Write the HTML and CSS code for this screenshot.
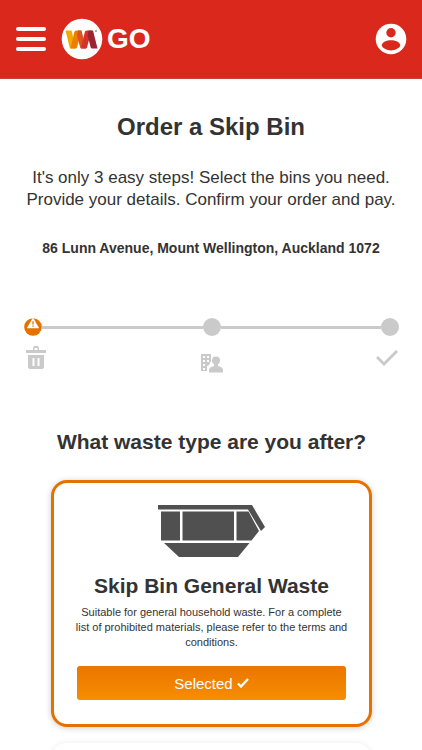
FILE: index.html
```html
<!DOCTYPE html>
<html lang="en">
<head>
<meta charset="utf-8">
<meta name="viewport" content="width=device-width, initial-scale=1">
<title>Order a Skip Bin</title>
<link rel="stylesheet" href="styles.css">
</head>
<body>
<header class="topbar">
  <button class="icon-button" type="button" aria-label="Menu">
    <svg width="32" height="26" viewBox="0 0 32 26" fill="none" stroke="#fff" stroke-width="4" stroke-linecap="round"><path d="M3 3h26M3 13h26M3 23h26"/></svg>
  </button>
  <a class="brand" href="#">
    <svg width="42" height="42" viewBox="0 0 42 42" aria-hidden="true">
      <circle cx="21" cy="21" r="20.300" fill="#fff"/>
      <path fill="#f2a900" d="M4.500 12.500h6l4.500 18H10q-1 0-1.300-1z"/>
      <path fill="#ef7d00" d="M15.500 12.500h5l-4.500 17q-.3 1-1.500 1H9.500l3.700-16q.3-2 2.300-2z"/>
      <path fill="#d9541e" d="M17 12.500h3.500l4.500 18h-4.500q-1 0-1.300-1l-3.200-12z"/>
      <path fill="#d6322b" d="M25.500 12.500h5l-4.500 17q-.3 1-1.500 1h-4.500l3.700-16q.3-2 1.800-2z"/>
      <path fill="#9b2433" d="M27.500 12.500H32l4.500 18h-5.500q-1 0-1.300-1l-3-12z"/>
      <circle cx="35" cy="13" r=".9" fill="#888"/>
    </svg>
    <span>GO</span>
  </a>
  <button class="icon-button account" type="button" aria-label="Account">
    <svg width="32" height="32" viewBox="0 0 32 32"><circle cx="16" cy="16" r="15.300" fill="#fff"/><circle cx="16" cy="9.800" r="4.700" fill="#da291c"/><path d="M6.800 22.300c0-3.200 5-5.100 9.200-5.100s9.200 1.900 9.200 5.100c0 2.800-5 5.100-9.200 5.100s-9.200-2.300-9.200-5.100z" fill="#da291c"/></svg>
  </button>
</header>

<main>
  <section class="intro">
    <h1>Order a Skip Bin</h1>
    <p class="lead">It's only 3 easy steps! Select the bins you need. Provide your details. Confirm your order and pay.</p>
    <p class="address">86 Lunn Avenue, Mount Wellington, Auckland 1072</p>
  </section>

  <div class="progress" aria-label="Order steps">
    <div class="track">
      <svg class="dot" viewBox="0 0 19 19"><circle cx="9.500" cy="9.500" r="9.300" fill="#e57200"/><path d="M9.500 0L15.500 10.500h-12z" fill="#fff" stroke="#fff" stroke-linejoin="round" stroke-width=".6"/><path d="M9.500 3.500v3.300M9.500 7.800v1.400" stroke="#e57200" stroke-width="1.400"/></svg>
      <span class="line"></span>
      <span class="dot idle"></span>
      <span class="line"></span>
      <span class="dot idle"></span>
    </div>
    <div class="step-icons">
      <svg viewBox="0 0 22 28" fill="#cacacb"><path d="M0 4h7V2q0-2 2-2h2q2 0 2 2v2h7v3H0zM8.500 4h3V2h-3z" fill-rule="evenodd"/><path fill-rule="evenodd" d="M2 9h16v12q0 2-2 2H4q-2 0-2-2zM6.500 12v8h2v-8zM11.500 12v8h2v-8z"/></svg>
      <svg viewBox="0 0 22 28" fill="#cacacb"><path fill-rule="evenodd" d="M0 8h10v7l-2 4-2 1v5H0zM2 10v2h2v-2zM6 10v2h2v-2zM2 14v2h2v-2zM6 14v2h2v-2zM2 18v2h2v-2zM2 22v2h2v-2z"/><circle cx="15" cy="14.500" r="4"/><path d="M13 17h4v3q5 1 5 4v2.500H8V24q0-3 5-4z"/></svg>
      <svg viewBox="0 0 22 28" fill="none" stroke="#cacacb" stroke-width="3"><path d="M1 11l7 7L21 5"/></svg>
    </div>
  </div>

  <section class="choices">
    <h2>What waste type are you after?</h2>
    <article class="card selected">
      <svg class="bin" viewBox="0 0 108 53" aria-hidden="true" fill="#505050">
        <path d="M0 0h94l13 22-4 4L90 4.500H0z"/>
        <path d="M3 6.500h19v29H3zM24.500 6.500h51.500v29H24.500zM78.500 6.500h12l10.500 19.500-7.500 9.500h-15zM6 38h85.500L80 52H21z"/>
      </svg>
      <h3>Skip Bin General Waste</h3>
      <p>Suitable for general household waste. For a complete list of prohibited materials, please refer to the terms and conditions.</p>
      <button class="select" type="button">Selected <svg width="12" height="10" viewBox="0 0 12 10" fill="none" stroke="#fff" stroke-width="2.400"><path d="M1 5.500l3 3L11 1"/></svg></button>
    </article>
    <article class="card"></article>
  </section>
</main>
</body>
</html>
```
FILE: styles.css
```css
* { box-sizing: border-box; }

body {
  margin: 0;
  background: #fff;
  color: #333;
  font-family: "Liberation Sans", Arial, sans-serif;
  text-align: center;
}

h1, h2, h3, p { margin: 0; }
svg { display: block; }

.topbar {
  display: flex;
  align-items: center;
  gap: 14px;
  height: 79px;
  padding: 0 15px;
  background: #da291c;
  border-bottom: 1px solid #c9443a;
}

.icon-button {
  padding: 0;
  border: 0;
  background: none;
  cursor: pointer;
}

.account { margin-left: auto; }

.brand {
  display: flex;
  align-items: center;
  gap: 4px;
  color: #fff;
  font-size: 28px;
  font-weight: bold;
  text-decoration: none;
}

.intro { padding: 32px 20px 0; }

h1 {
  font-size: 24px;
  line-height: 32px;
}

.lead {
  margin-top: 24px;
  font-size: 17px;
  line-height: 22px;
}

.address {
  margin-top: 27px;
  font-size: 14px;
  font-weight: bold;
  line-height: 20px;
}

.progress { padding: 60px 23px 0 24px; }

.track {
  display: flex;
  align-items: center;
}

.dot {
  flex: none;
  width: 18px;
  height: 18px;
}

.idle {
  border-radius: 50%;
  background: #cacacb;
}

.line {
  flex: 1;
  height: 3px;
  background: #cacacb;
}

.step-icons {
  display: flex;
  justify-content: space-between;
  padding: 10px 1px 0 2px;
}

.step-icons svg {
  width: 22px;
  height: 28px;
}

.choices {
  display: flex;
  flex-direction: column;
  gap: 16px;
  padding: 53px 50px 0 51px;
}

h2 {
  margin: 0 -20px 7px;
  font-size: 21px;
  line-height: 30px;
}

.card {
  min-height: 48px;
  padding: 22px 23px 24px;
  border: 3px solid #fff;
  border-radius: 16px;
  background: #fff;
  box-shadow: 0 1px 6px rgba(0, 0, 0, .2);
}

.card:last-child { box-shadow: 0 0 6px rgba(0, 0, 0, .08); }

.selected { border-color: #e57200; }

.bin {
  width: 108px;
  height: 53px;
  margin: 0 auto;
}

h3 {
  margin-top: 13px;
  font-size: 21px;
  line-height: 30px;
  white-space: nowrap;
}

.card p {
  margin: 4px -3px 0;
  font-size: 11px;
  line-height: 15px;
}

.select {
  display: flex;
  align-items: center;
  justify-content: center;
  gap: 4px;
  width: 100%;
  height: 34px;
  margin-top: 16px;
  border: 0;
  border-radius: 3px;
  background: linear-gradient(#eb7600, #f78d00);
  color: #fff;
  font: 15px "Liberation Sans", Arial, sans-serif;
  cursor: pointer;
}
```
